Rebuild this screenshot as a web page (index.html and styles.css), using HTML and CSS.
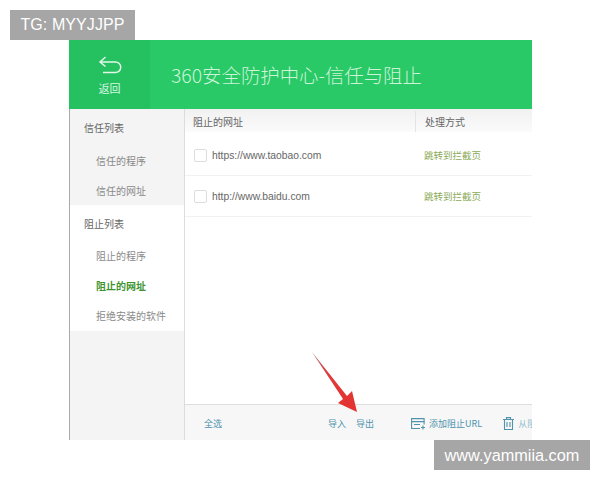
FILE: index.html
```html
<!DOCTYPE html>
<html lang="zh">
<head>
<meta charset="utf-8">
<title>360安全防护中心</title>
<link rel="stylesheet" href="styles.css">
</head>
<body>
<div class="tag">TG: MYYJJPP</div>
<main class="window">
  <header class="topbar">
    <div class="back">
      <svg class="back-icon" width="24" height="20" viewBox="0 0 24 20" fill="none" stroke="#e4f8ea" stroke-width="1.5"><path d="M7.500 1 2 6l5.500 4.500"/><path d="M2 6h15.500a4.700 4.700 0 0 1 0 10.500H5"/></svg>
      <span>返回</span>
    </div>
    <h1>360安全防护中心-信任与阻止</h1>
  </header>
  <div class="body">
    <nav class="side">
      <section class="group trust">
        <div class="group-title">信任列表</div>
        <a>信任的程序</a>
        <a>信任的网址</a>
      </section>
      <section class="group block">
        <div class="group-title">阻止列表</div>
        <a>阻止的程序</a>
        <a class="active">阻止的网址</a>
        <a>拒绝安装的软件</a>
      </section>
      <div class="side-fill"></div>
    </nav>
    <div class="content">
      <div class="thead">
        <div class="col-url">阻止的网址</div>
        <div class="col-act">处理方式</div>
      </div>
      <div class="row first">
        <div class="col-url"><i class="check"></i>https://www.taobao.com</div>
        <div class="col-act jump">跳转到拦截页</div>
      </div>
      <div class="row">
        <div class="col-url"><i class="check"></i>http://www.baidu.com</div>
        <div class="col-act jump">跳转到拦截页</div>
      </div>
      <div class="spacer"></div>
      <footer class="foot">
        <a class="all">全选</a>
        <a class="imp">导入</a>
        <a class="exp">导出</a>
        <a class="add"><svg width="15" height="12" viewBox="0 0 15 12" fill="none" stroke="#4f93ad" stroke-width="1.100"><path d="M9 10.500H.6V.6h12.500v6"/><path d="M.6 3.600h12.500M3 6.500h6M12 7.500v4M10 9.500h4"/></svg>添加阻止URL</a>
        <a class="del"><svg width="11" height="13" viewBox="0 0 11 13" fill="none" stroke="#4f93ad" stroke-width="1.100"><path d="M0 2.500h11M3.500 2.500V.6h4v1.900M1.500 2.500v10h8v-10M4 5v5M7 5v5"/></svg>从阻</a>
      </footer>
      <svg class="arrow" width="50" height="62" viewBox="0 0 50 62"><defs><linearGradient id="arrow-fade" x1="0" y1="0" x2="0" y2="1"><stop offset="0" stop-color="#a9686f"/><stop offset=".35" stop-color="#df3b3b"/><stop offset="1" stop-color="#e5322e"/></linearGradient></defs><path d="M1 1 36 45l5-5 5 21-19-9 5-4Z" fill="url(#arrow-fade)"/></svg>
    </div>
  </div>
</main>
<div class="site">www.yammiia.com</div>
</body>
</html>
```
FILE: styles.css
```css
* { box-sizing: border-box; }
html, body { margin: 0; height: 480px; overflow: hidden; background: #fff; }
body { padding: 40px 68px 0 69px; font-family: "Noto Sans CJK SC", "Liberation Sans", sans-serif; position: relative; }
.tag, .site { position: absolute; background: #a6a6a6; color: #fff; font-family: "Liberation Sans", sans-serif; display: flex; align-items: center; justify-content: center; height: 30px; }
.tag { left: 10px; top: 10px; width: 125px; font-size: 16px; letter-spacing: .1px; }
.site { left: 434px; top: 440px; width: 156px; font-size: 16.300px; }
.window { height: 400px; display: flex; flex-direction: column; overflow: hidden; position: relative; }
.topbar { height: 69px; background: #28c966; display: flex; align-items: center; color: #d9f6e2; flex: none; }
.back { width: 81px; height: 100%; background: #25c160; display: flex; flex-direction: column; align-items: center; padding-top: 16px; font-size: 11px; gap: 4px; line-height: 16px; }
h1 { margin: 0 0 0 21px; font-size: 19.400px; font-weight: 300; color: #cdf3d9; }
.body { flex: 1; display: flex; min-height: 0; }
.side { width: 116px; border-left: 1.500px solid #a9a9a9; border-right: 1px solid #dcdcdc; display: flex; flex-direction: column; flex: none; color: #777; font-size: 10px; }
.group { display: flex; flex-direction: column; }
.trust { background: #f4f4f4; height: 96px; }
.block { background: #fff; height: 126px; }
.side-fill { flex: 1; background: #f4f4f4; }
.group-title { height: 37px; line-height: 38px; padding-left: 14px; color: #666; }
.block .group-title { height: 36px; }
.trust a, .block a { display: block; height: 30px; line-height: 30px; padding-left: 26px; color: #8a8a8a; }
.side a.active { color: #3f9432; font-weight: 700; }
.content { flex: 1; display: flex; flex-direction: column; position: relative; min-width: 0; }
.thead { height: 23px; padding-top: 2px; display: flex; align-items: center; font-size: 10px; color: #666; background: linear-gradient(#f1f1f1, #fbfbfb); flex: none; }
.col-url { width: 230px; padding-left: 8px; display: flex; align-items: center; flex: none; }
.col-act { padding-left: 9px; }
.thead .col-act { border-left: 1px solid #e4e4e4; height: 100%; display: flex; align-items: center; }
.row { height: 41px; display: flex; align-items: center; border-bottom: 1px solid #f1f1f1; font-family: "Liberation Sans", sans-serif; font-size: 10.300px; color: #666; flex: none; }
.row.first { height: 44px; padding-top: 3px; }
.check { width: 13px; height: 13px; border: 1px solid #ddd; border-radius: 2px; background: #fff; margin: 0 5px 0 1px; flex: none; }
.jump { color: #8aa956; font-family: "Noto Sans CJK SC", sans-serif; font-size: 9.500px; }
.spacer { flex: 1; }
.foot { height: 36px; padding-top: 2px; background: #f7f7f7; border-top: 1px solid #dedede; display: flex; align-items: center; font-size: 9px; color: #4f93ad; flex: none; white-space: nowrap; overflow: hidden; }
.foot a { display: flex; align-items: center; flex: none; }
.all { margin-left: 19px; }
.imp { margin-left: 106px; }
.exp { margin-left: 10px; }
.add { margin-left: 37px; gap: 3px; }
.del { margin-left: 21px; gap: 4px; color: #8fbdcf; }
.arrow { position: absolute; left: 126px; top: 242px; }
```
